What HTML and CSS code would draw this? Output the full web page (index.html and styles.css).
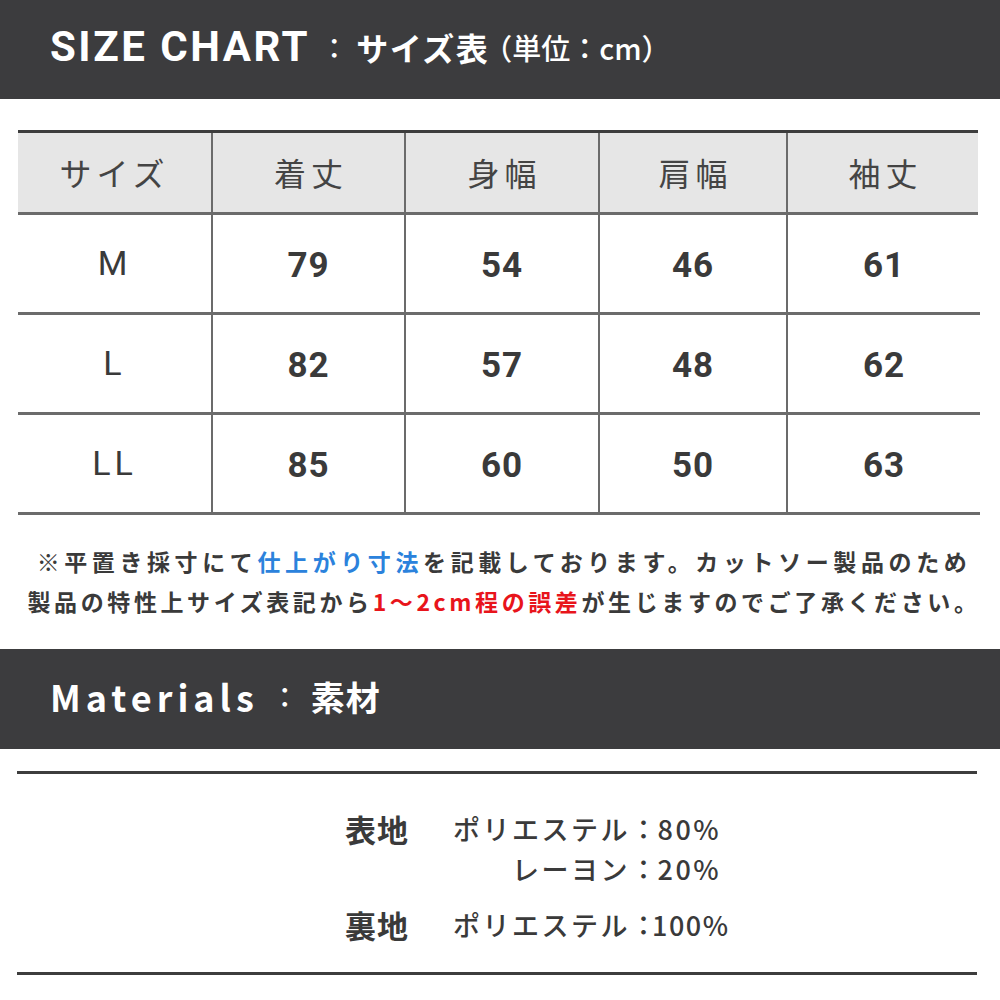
FILE: index.html
```html
<!DOCTYPE html>
<html lang="ja">
<head>
<meta charset="utf-8">
<title>SIZE CHART</title>
<link rel="stylesheet" href="styles.css">
</head>
<body>
<div class="page">
  <header class="bar bar-size">
    <span class="bar-en">SIZE CHART</span>
    <span class="bar-colon">：</span>
    <span class="bar-ja">サイズ表</span>
    <span class="bar-unit">（単位：cm）</span>
  </header>

  <div class="chart">
    <div class="row head">
      <div class="cell">サイズ</div>
      <div class="cell">着丈</div>
      <div class="cell">身幅</div>
      <div class="cell">肩幅</div>
      <div class="cell">袖丈</div>
    </div>
    <div class="row">
      <div class="cell size">M</div>
      <div class="cell num">79</div>
      <div class="cell num">54</div>
      <div class="cell num">46</div>
      <div class="cell num">61</div>
    </div>
    <div class="row">
      <div class="cell size">L</div>
      <div class="cell num">82</div>
      <div class="cell num">57</div>
      <div class="cell num">48</div>
      <div class="cell num">62</div>
    </div>
    <div class="row">
      <div class="cell size">LL</div>
      <div class="cell num">85</div>
      <div class="cell num">60</div>
      <div class="cell num">50</div>
      <div class="cell num">63</div>
    </div>
  </div>

  <div class="note">
    <p class="note-line">※平置き採寸にて<span class="blue">仕上がり寸法</span>を記載しております。カットソー製品のため</p>
    <p class="note-line second">製品の特性上サイズ表記から<span class="red">1～2cm程の誤差</span>が生じますのでご了承ください。</p>
  </div>

  <header class="bar bar-mat">
    <span class="mat-en">Materials</span>
    <span class="mat-colon">：</span>
    <span class="mat-ja">素材</span>
  </header>

  <div class="materials">
    <div class="mat-row">
      <div class="mat-label">表地</div>
      <div class="mat-values">
        <div class="mat-line">ポリエステル<span class="colon">：</span>80%</div>
        <div class="mat-line">レーヨン<span class="colon">：</span>20%</div>
      </div>
    </div>
    <div class="mat-row second">
      <div class="mat-label">裏地</div>
      <div class="mat-values">
        <div class="mat-line">ポリエステル<span class="colon tight">：</span><span class="pct">100%</span></div>
      </div>
    </div>
  </div>
</div>
</body>
</html>
```

FILE: styles.css
```css
html, body {
  margin: 0;
  padding: 0;
  background: #ffffff;
}

body {
  font-family: "Noto Sans CJK JP", "Noto Sans", sans-serif;
  color: #3a3a3a;
}

.page {
  width: 1000px;
  height: 1000px;
  overflow: hidden;
}

.bar {
  background: #3c3c3e;
  color: #ffffff;
  display: flex;
  align-items: center;
  box-sizing: border-box;
  padding-left: 50px;
}

.bar-size {
  height: 99px;
  padding-bottom: 6px;
}

.bar-en {
  font-family: Roboto, "Liberation Sans", sans-serif;
  font-weight: 700;
  font-size: 42px;
  letter-spacing: 2.5px;
}

.bar-colon {
  font-size: 28px;
  font-weight: 500;
  margin-left: 10px;
  margin-right: 8px;
}

.bar-ja {
  font-weight: 700;
  font-size: 32px;
  letter-spacing: 1.5px;
}

.bar-unit {
  font-size: 29px;
  font-weight: 500;
  margin-left: -6px;
}

/* size chart table */
.chart {
  margin: 31px 20px 0 18px;
}

.row {
  display: grid;
  grid-template-columns: 193px 193px 194px 188px 1fr;
  border-bottom: 3px solid #6b6b6b;
  height: 100px;
  box-sizing: border-box;
}

.row.head {
  background: #e6e6e6;
  border-top: 3px solid #3d3d3d;
  height: 85px;
  margin-right: 2px;
}

.cell {
  display: flex;
  align-items: center;
  justify-content: center;
  border-left: 2px solid #6b6b6b;
}

.cell:first-child {
  border-left: none;
}

.head .cell {
  font-size: 32px;
  font-weight: 400;
  color: #444444;
  letter-spacing: 5px;
  padding-left: 5px;
  padding-bottom: 2px;
}

.head .cell:first-child {
  padding-left: 0;
}

.size {
  font-family: Roboto, "Liberation Sans", sans-serif;
  font-size: 34px;
  font-weight: 400;
  letter-spacing: 4px;
  color: #3a3a3a;
  padding-bottom: 2px;
}

.num {
  font-family: Roboto, "Liberation Sans", sans-serif;
  font-size: 35px;
  font-weight: 700;
  letter-spacing: 1px;
  color: #3a3a3a;
  padding-top: 3px;
}

/* note */
.note {
  margin-top: 26px;
  padding-left: 8px;
  text-align: center;
}

.note-line {
  margin: 0;
  font-size: 23px;
  font-weight: 700;
  letter-spacing: 4.6px;
  line-height: 40px;
  white-space: nowrap;
  color: #3a3a3a;
}

.note-line.second {
  letter-spacing: 3.6px;
}

.blue {
  color: #2b82dc;
}

.red {
  color: #e8141b;
}

/* materials */
.bar-mat {
  margin-top: 28px;
  height: 100px;
  padding-bottom: 6px;
}

.mat-en {
  font-weight: 700;
  font-size: 36px;
  letter-spacing: 5px;
}

.mat-colon {
  font-size: 28px;
  font-weight: 500;
  margin-left: 12px;
  margin-right: 12px;
}

.mat-ja {
  font-weight: 700;
  font-size: 34px;
  letter-spacing: 1px;
}

.materials {
  margin: 22px 23px 0 17px;
  border-top: 3px solid #3d3d3d;
  border-bottom: 3px solid #3d3d3d;
  height: 204px;
  box-sizing: border-box;
  padding-top: 35px;
  padding-left: 328px;
}

.mat-row {
  display: flex;
  align-items: flex-start;
}

.mat-row.second {
  margin-top: 16px;
}

.mat-label {
  width: 108px;
  font-size: 31px;
  font-weight: 700;
  letter-spacing: 1px;
  line-height: 40px;
}

.mat-values {
  display: flex;
  flex-direction: column;
  align-items: flex-end;
}

.mat-line {
  font-size: 27px;
  font-weight: 500;
  letter-spacing: 2.5px;
  line-height: 40px;
}

.colon {
  display: inline-block;
  margin: 0 -2px 0 0;
}

.colon.tight {
  margin: 0;
  letter-spacing: -5px;
}

.pct {
  letter-spacing: 1.5px;
}
```
